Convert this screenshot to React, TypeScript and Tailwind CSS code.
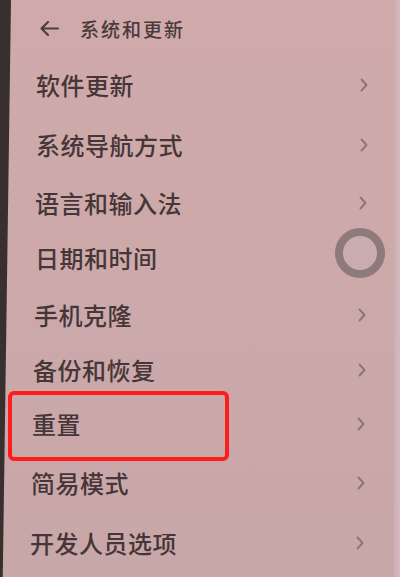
import React from "react";

const rows = [
  { t: "软件更新", h: "h-[58px]", pl: "pl-[25px]", pr: "pr-[25px]" },
  { t: "系统导航方式", h: "h-[61px]", pl: "pl-[25px]", pr: "pr-[25px]" },
  { t: "语言和输入法", h: "h-[55px]", pl: "pl-[24px]", pr: "pr-[26px]" },
  { t: "日期和时间", h: "h-[56px]", pl: "pl-[24px]", pr: "pr-[26px]" },
  { t: "手机克隆", h: "h-[57px]", pl: "pl-[23px]", pr: "pr-[27px]" },
  { t: "备份和恢复", h: "h-[53px]", pl: "pl-[22px]", pr: "pr-[27px]" },
  { t: "重置", h: "h-[56px]", pl: "pl-[21px]", pr: "pr-[28px]" },
  { t: "简易模式", h: "h-[61px]", pl: "pl-[20px]", pr: "pr-[28px]" },
  { t: "开发人员选项", h: "h-[60px]", pl: "pl-[19px]", pr: "pr-[29px]" },
];

function Chevron() {
  return (
    <svg width="10" height="14" viewBox="0 0 10 14" fill="none">
      <path d="M2.5 1.5 L7.5 7 L2.5 12.5" stroke="#8a7577" strokeWidth="1.9" strokeLinecap="round" strokeLinejoin="round" />
    </svg>
  );
}

export default function App() {
  return (
    <div className="relative flex h-[577px] w-[400px] overflow-hidden bg-gradient-to-b from-[#d0aaaa] to-[#c8a7a9] [font-family:'Noto_Sans_CJK_SC','Noto_Sans',sans-serif]">
      <div className="w-[11px] shrink-0 bg-[#37302f] [clip-path:polygon(0_0,100%_0,25%_100%,0_100%)]" />
      <div className="flex flex-1 flex-col">
        <div className="flex h-[56px] items-center pl-[28px] text-[#4a3a3c]">
          <svg width="21" height="17" viewBox="0 0 21 17" fill="none">
            <path d="M19 8.5 H3 M9 2 L2.5 8.5 L9 15" stroke="#4d3d3f" strokeWidth="2.2" strokeLinecap="round" strokeLinejoin="round" />
          </svg>
          <span className="ml-[20px] text-[19px] font-medium leading-none tracking-[2px]">系统和更新</span>
        </div>
        {rows.map((r) => (
          <div key={r.t} className={`flex items-center justify-between ${r.h} ${r.pl} ${r.pr}`}>
            <span className="text-[24px] font-medium leading-none tracking-[0.5px] text-[#463638]">{r.t}</span>
            <Chevron />
          </div>
        ))}
      </div>
      <div className="w-[6px] shrink-0 bg-gradient-to-r from-[#cdaeb2] to-[#d5bac0]" />
      <div className="absolute left-[335px] top-[228px] h-[50px] w-[50px] rounded-full border-[8px] border-[#8d7a7b] bg-[#c9adae] blur-[0.6px]" />
      <div className="absolute left-[8px] top-[391px] h-[70px] w-[221px] rounded-[6px] border-[4px] border-[#ff1c1c]" />
    </div>
  );
}
